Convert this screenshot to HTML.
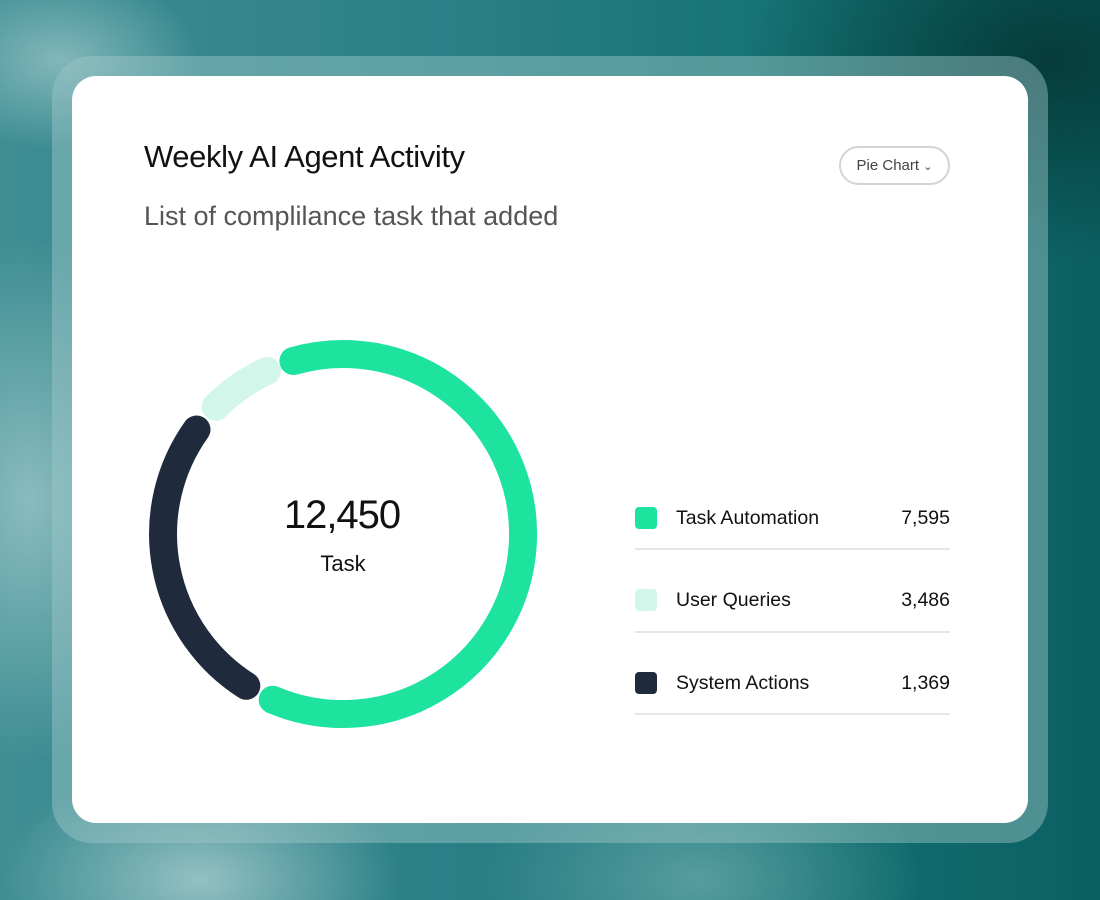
<!DOCTYPE html>
<html><head><meta charset="utf-8"><style>
html,body{margin:0;padding:0}
body{width:1100px;height:900px;position:relative;overflow:hidden;font-family:"Liberation Sans",sans-serif;
background:
radial-gradient(ellipse 160px 260px at 30px 500px,rgba(200,225,228,.55),transparent),
radial-gradient(ellipse 200px 120px at 200px 880px,rgba(210,230,232,.6),transparent),
radial-gradient(ellipse 140px 90px at 60px 60px,rgba(200,225,228,.5),transparent),
radial-gradient(ellipse 300px 200px at 1050px 60px,rgba(5,55,55,.9),transparent),
radial-gradient(ellipse 220px 140px at 700px 880px,rgba(160,205,208,.45),transparent),
linear-gradient(90deg,#3e8e93 0%,#2a8086 40%,#137071 75%,#0b5f61 100%);}
.frame{position:absolute;left:52px;top:56px;width:996px;height:787px;border-radius:40px;background:rgba(160,200,202,.45)}
.card{position:absolute;left:72px;top:76px;width:956px;height:747px;border-radius:24px;background:#fff}
.t{position:absolute;left:144px;top:139px;font-size:31px;color:#111;letter-spacing:-0.4px}
.s{position:absolute;left:144px;top:201px;font-size:27px;color:#555;letter-spacing:0}
.btn{position:absolute;left:839px;top:146px;border:2px solid #d4d4d4;border-radius:20px;box-sizing:border-box;width:111px;height:39px;font-size:15px;color:#444;line-height:35px;text-align:center}
.leg{position:absolute;left:635px;width:315px;border-bottom:2px solid #e6e6e6;box-sizing:border-box}
.sq{position:absolute;left:0;top:0;width:22px;height:22px;border-radius:4px}
.lb{position:absolute;left:41px;top:0;font-size:19.5px;color:#111}
.v{position:absolute;right:0;top:0;font-size:19.5px;color:#111}
</style></head><body>
<div class="frame"></div>
<div class="card"></div>
<div class="t">Weekly AI Agent Activity</div>
<div class="s">List of complilance task that added</div>
<div class="btn">Pie Chart <span style="font-size:11px">&#8964;</span></div>
<svg style="position:absolute;left:0;top:0" width="1100" height="900">
<g fill="none" stroke-width="28" stroke-linecap="round">
<path d="M293.4 361 A180 180 0 1 1 272.7 699.7" stroke="#1de39f"/>
<path d="M246.3 685.8 A180 180 0 0 1 196.5 429.5" stroke="#1f2a3d"/>
<path d="M215.7 406.7 A180 180 0 0 1 266.9 370.9" stroke="#d2f7ea"/>
</g>
<text x="342" y="528" text-anchor="middle" font-family="Liberation Sans" font-size="40" fill="#111" letter-spacing="-1">12,450</text>
<text x="343" y="571" text-anchor="middle" font-family="Liberation Sans" font-size="22" fill="#111">Task</text>
</svg>
<div class="leg" style="top:507px;height:43px"><div class="sq" style="background:#1de39f"></div><div class="lb">Task Automation</div><div class="v">7,595</div></div>
<div class="leg" style="top:589px;height:44px"><div class="sq" style="background:#d2f7ea"></div><div class="lb">User Queries</div><div class="v">3,486</div></div>
<div class="leg" style="top:672px;height:43px"><div class="sq" style="background:#1f2a3d"></div><div class="lb">System Actions</div><div class="v">1,369</div></div>
</body></html>
